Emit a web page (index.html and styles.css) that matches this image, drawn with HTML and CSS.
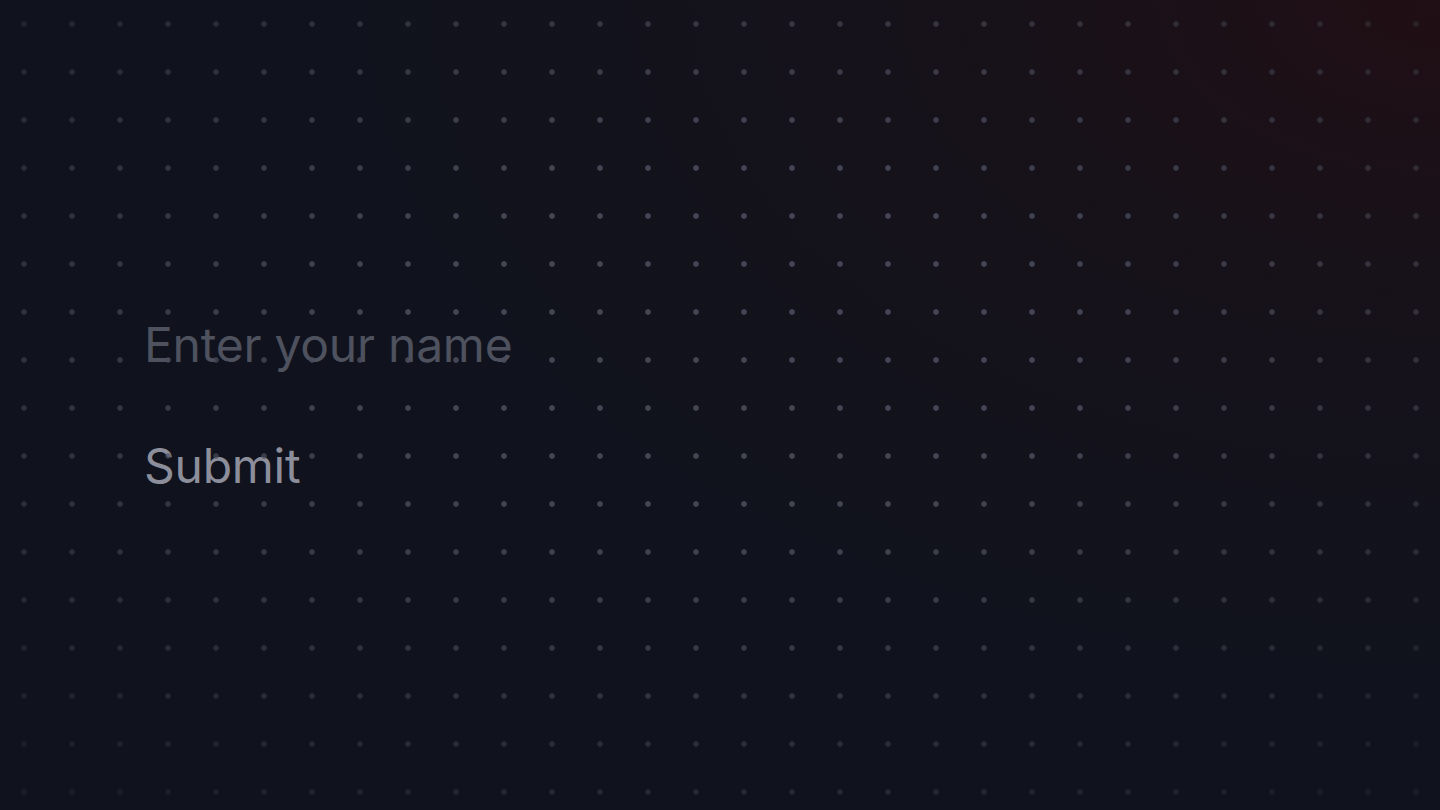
FILE: index.html
```html
<!DOCTYPE html>
<html lang="en">
<head>
<meta charset="utf-8">
<title>Form</title>
<link rel="stylesheet" href="styles.css">
</head>
<body>
<div class="glow"></div>
<main class="page">
  <form class="form" onsubmit="return false">
    <input class="name-input" type="text" placeholder="Enter your name">
    <button class="submit" type="submit">Submit</button>
  </form>
</main>
<div class="dots"></div>
</body>
</html>
```

FILE: styles.css
```css
html, body {
  margin: 0;
  padding: 0;
  height: 100%;
}
body {
  background: #10131d;
  font-family: Inter, "Noto Sans", sans-serif;
  overflow: hidden;
  position: relative;
}
.glow {
  position: absolute;
  inset: 0;
  background: radial-gradient(ellipse 1100px 680px at 100% 0%, rgba(36, 14, 18, 0.8) 0%, rgba(30, 16, 22, 0.45) 45%, rgba(16, 19, 29, 0) 100%);
  pointer-events: none;
}
.dots {
  position: absolute;
  inset: 0;
  background-image: radial-gradient(circle at 24px 24px, rgba(74, 77, 92, 0.9) 0, rgba(74, 77, 92, 0.9) 2.4px, rgba(74, 77, 92, 0) 3.2px);
  background-size: 48px 48px;
  -webkit-mask-image: radial-gradient(ellipse 72% 68% at 50% 42%, #000 30%, rgba(0,0,0,0.22) 100%);
  mask-image: radial-gradient(ellipse 72% 68% at 50% 42%, #000 30%, rgba(0,0,0,0.22) 100%);
  pointer-events: none;
}
.page {
  position: relative;
  height: 100%;
  display: flex;
  flex-direction: column;
  justify-content: center;
  padding-left: 144px;
}
.form {
  display: flex;
  flex-direction: column;
  align-items: flex-start;
  gap: 62px;
}
.name-input,
.submit {
  font-family: Inter, "Noto Sans", sans-serif;
  font-size: 48px;
  line-height: normal;
  letter-spacing: -0.25px;
  background: transparent;
  border: none;
  outline: none;
  padding: 0;
  margin: 0;
}
.name-input {
  width: 600px;
  color: #c9cbd4;
}
.name-input::placeholder {
  color: #4e515e;
}
.submit {
  color: #8c8e9b;
  cursor: pointer;
}
```
